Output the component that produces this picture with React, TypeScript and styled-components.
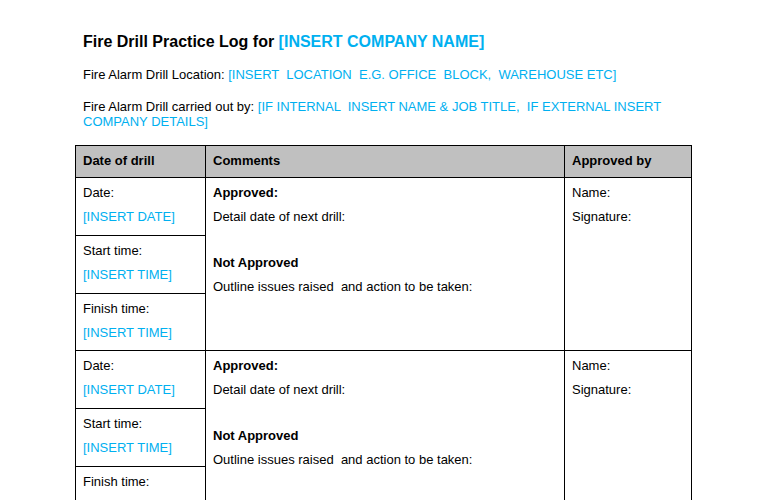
import React from "react";
import styled, { createGlobalStyle } from "styled-components";

const Global = createGlobalStyle`
  html, body { margin: 0; padding: 0; background: #ffffff; }
  body { font-family: "Liberation Sans", Arial, sans-serif; color: #000; }
`;

const BLUE = "#00B0F0";

const Page = styled.div`
  width: 780px;
  height: 500px;
  overflow: hidden;
  box-sizing: border-box;
  padding: 32px 0 0 75px;
`;

const Intro = styled.div`
  padding-left: 8px;
  width: 608px;
`;

const Title = styled.h1`
  margin: 0;
  font-size: 16px;
  line-height: 19px;
  font-weight: bold;
`;

const Line = styled.p<{ $top: number }>`
  margin: ${(p) => p.$top}px 0 0 0;
  font-size: 13px;
  line-height: 15px;
  white-space: pre-wrap;
`;

const Blue = styled.span`
  color: ${BLUE};
`;

const Table = styled.div`
  margin-top: 16px;
  width: 617px;
  display: grid;
  grid-template-columns: 129px 358px 126px;
  grid-template-rows: 31px 57px 57px 56px 57px 57px 57px;
  gap: 1px;
  padding: 1px;
  background: #000;
  box-sizing: border-box;
`;

const HeadCell = styled.div`
  background: #c0c0c0;
  font-size: 13px;
  line-height: 15px;
  font-weight: bold;
  padding: 7px 7px 0 7px;
`;

const Cell = styled.div<{ $span?: number }>`
  background: #fff;
  padding: 7px 7px 0 7px;
  font-size: 13px;
  line-height: 15px;
  grid-row: span ${(p) => p.$span ?? 1};
  display: flex;
  flex-direction: column;
  gap: 9px;
`;

const Bold = styled.div`
  font-weight: bold;
`;

const Text = styled.div`
  white-space: pre-wrap;
`;

const Spacer = styled.div`
  height: 13px;
`;

const DrillRows = () => (
  <>
    <Cell>
      <Text>Date:</Text>
      <Blue>[INSERT DATE]</Blue>
    </Cell>
    <Cell $span={3}>
      <Bold>Approved:</Bold>
      <Text>Detail date of next drill:</Text>
      <Spacer />
      <Bold>Not Approved</Bold>
      <Text>Outline issues raised  and action to be taken:</Text>
    </Cell>
    <Cell $span={3}>
      <Text>Name:</Text>
      <Text>Signature:</Text>
    </Cell>
    <Cell>
      <Text>Start time:</Text>
      <Blue>[INSERT TIME]</Blue>
    </Cell>
    <Cell>
      <Text>Finish time:</Text>
      <Blue>[INSERT TIME]</Blue>
    </Cell>
  </>
);

export default function App() {
  return (
    <>
      <Global />
      <Page>
        <Intro>
          <Title>
            Fire Drill Practice Log for <Blue>[INSERT COMPANY NAME]</Blue>
          </Title>
          <Line $top={16}>
            Fire Alarm Drill Location: <Blue>[INSERT  LOCATION  E.G. OFFICE  BLOCK,  WAREHOUSE ETC]</Blue>
          </Line>
          <Line $top={17}>
            Fire Alarm Drill carried out by: <Blue>[IF INTERNAL  INSERT NAME &amp; JOB TITLE,  IF EXTERNAL INSERT COMPANY DETAILS]</Blue>
          </Line>
        </Intro>
        <Table>
          <HeadCell>Date of drill</HeadCell>
          <HeadCell>Comments</HeadCell>
          <HeadCell>Approved by</HeadCell>
          <DrillRows />
          <DrillRows />
        </Table>
      </Page>
    </>
  );
}
